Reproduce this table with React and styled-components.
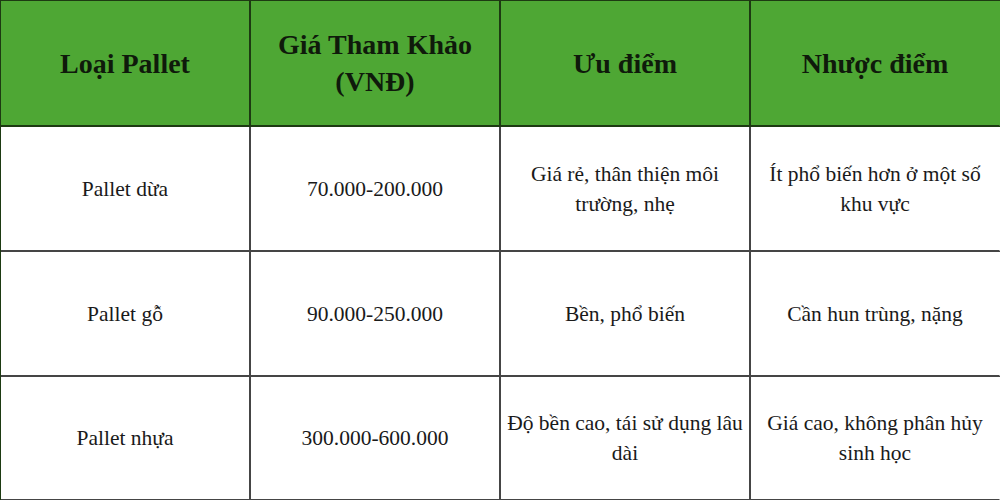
import React from 'react';
import styled, { createGlobalStyle } from 'styled-components';

const GlobalStyle = createGlobalStyle`
  html, body {
    margin: 0;
    padding: 0;
    background: #ffffff;
  }
`;

const headers = ['Loại Pallet', 'Giá Tham Khảo (VNĐ)', 'Ưu điểm', 'Nhược điểm'];

const rows = [
  ['Pallet dừa', '70.000-200.000', 'Giá rẻ, thân thiện môi trường, nhẹ', 'Ít phổ biến hơn ở một số khu vực'],
  ['Pallet gỗ', '90.000-250.000', 'Bền, phổ biến', 'Cần hun trùng, nặng'],
  ['Pallet nhựa', '300.000-600.000', 'Độ bền cao, tái sử dụng lâu dài', 'Giá cao, không phân hủy sinh học'],
];

const Table = styled.div`
  width: 1000px;
  height: 500px;
  box-sizing: border-box;
  display: grid;
  grid-template-columns: 250px 250px 250px 250px;
  grid-template-rows: 126px 125px 125px 124px;
  border-left: 1px solid #1d3a12;
  border-top: 1px solid #1d3a12;
  font-family: 'Liberation Serif', 'Times New Roman', serif;
`;

const Cell = styled.div`
  box-sizing: border-box;
  display: flex;
  align-items: center;
  justify-content: center;
  text-align: center;
  padding: 0 6px;
  background: ${(p) => (p.$head ? '#4ea734' : '#ffffff')};
  color: ${(p) => (p.$head ? '#0f1a0b' : '#1a1a1a')};
  font-size: ${(p) => (p.$head ? '28px' : '21.5px')};
  font-weight: ${(p) => (p.$head ? 700 : 400)};
  line-height: ${(p) => (p.$head ? '37px' : '30px')};
  border-right: 2px solid ${(p) => (p.$last ? 'transparent' : p.$head ? '#1d3a12' : '#454545')};
  border-bottom: 2px solid ${(p) => (p.$head ? '#1d3a12' : '#454545')};
`;

const Inner = styled.span`
  max-width: ${(p) => (p.$head ? '200px' : '238px')};
`;

export default function App() {
  return (
    <>
      <GlobalStyle />
      <Table>
        {headers.map((h, i) => (
          <Cell key={h} $head $last={i === 3}>
            <Inner $head>{h}</Inner>
          </Cell>
        ))}
        {rows.map((row) =>
          row.map((text, i) => (
            <Cell key={row[0] + i} $last={i === 3}>
              <Inner>{text}</Inner>
            </Cell>
          ))
        )}
      </Table>
    </>
  );
}
